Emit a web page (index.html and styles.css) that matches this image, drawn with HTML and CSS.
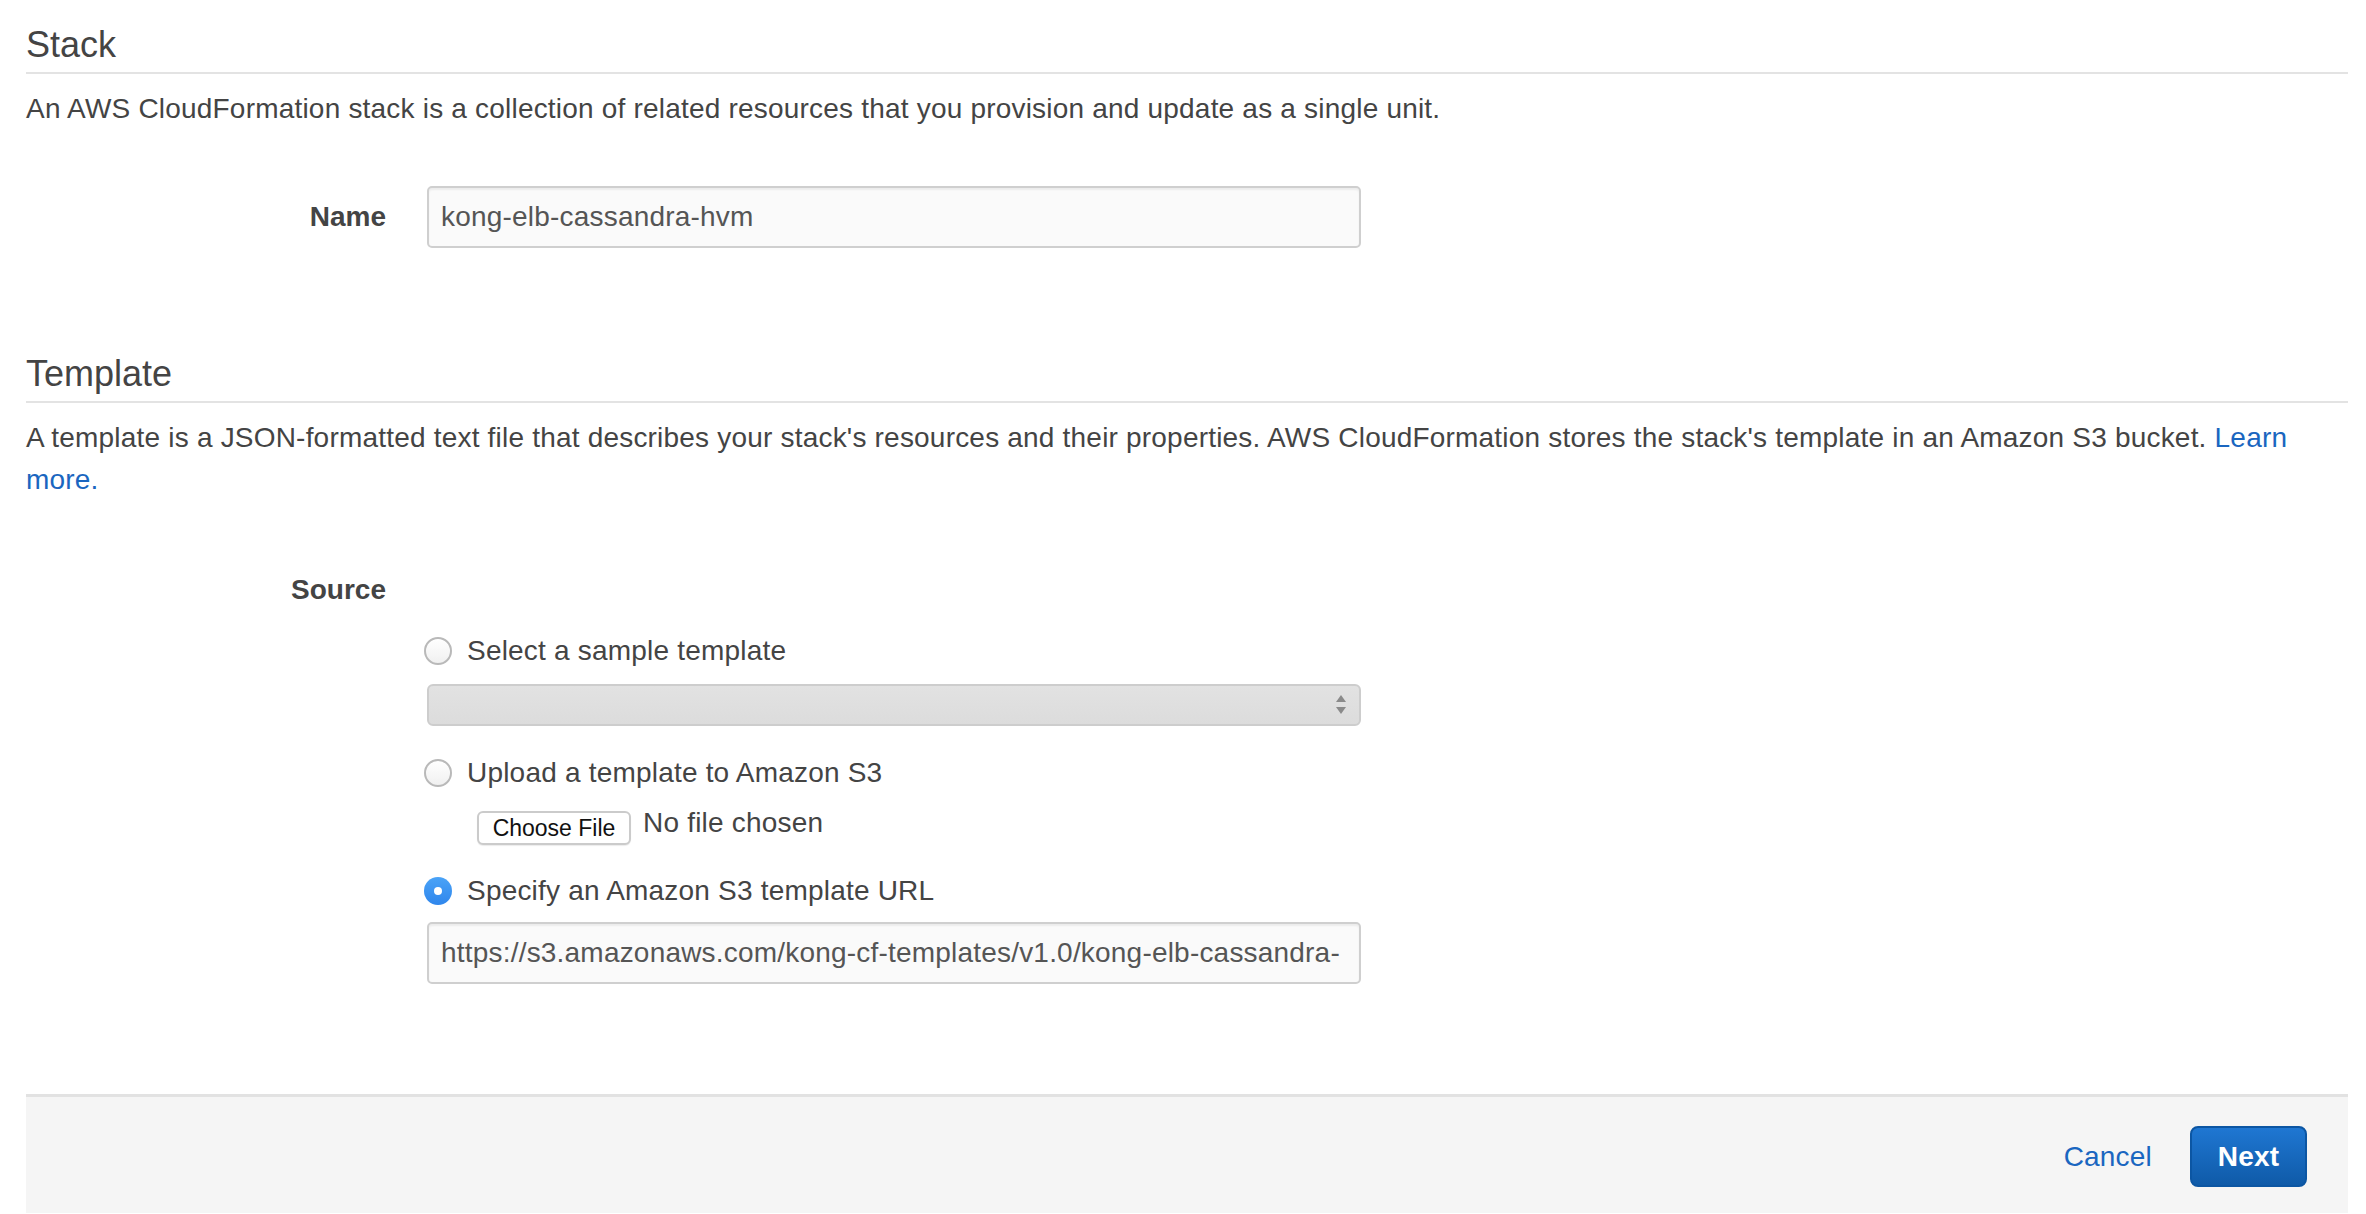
FILE: index.html
```html
<!DOCTYPE html>
<html>
<head>
<meta charset="utf-8">
<link rel="stylesheet" href="styles.css">
</head>
<body>
<div class="page">
  <section class="section stack">
    <h2 class="section-title">Stack</h2>
    <p class="section-desc">An AWS CloudFormation stack is a collection of related resources that you provision and update as a single unit.</p>
    <div class="form-row name-row">
      <div class="form-label">Name</div>
      <div class="text-field">kong-elb-cassandra-hvm</div>
    </div>
  </section>

  <section class="section template">
    <h2 class="section-title">Template</h2>
    <p class="section-desc">A template is a JSON-formatted text file that describes your stack's resources and their properties. AWS CloudFormation stores the stack's template in an Amazon S3 bucket. <a class="link" href="#">Learn more.</a></p>
    <div class="form-row source-row">
      <div class="form-label">Source</div>
      <div></div>
    </div>
    <div class="form-row">
      <div></div>
      <div class="options">
        <div class="radio-row">
          <span class="radio"></span>
          <span class="radio-label">Select a sample template</span>
        </div>
        <div class="select-field">
          <span class="select-arrows">
            <svg width="12" height="22" viewBox="0 0 12 22"><path d="M6 1 L11 8 L1 8 Z" fill="#8a8a8a"/><path d="M1 13 L11 13 L6 20 Z" fill="#8a8a8a"/></svg>
          </span>
        </div>
        <div class="radio-row gap-top">
          <span class="radio"></span>
          <span class="radio-label">Upload a template to Amazon S3</span>
        </div>
        <div class="file-row">
          <span class="file-btn">Choose File</span>
          <span class="file-text">No file chosen</span>
        </div>
        <div class="radio-row gap-top2">
          <span class="radio checked"></span>
          <span class="radio-label">Specify an Amazon S3 template URL</span>
        </div>
        <div class="text-field url-field">https://s3.amazonaws.com/kong-cf-templates/v1.0/kong-elb-cassandra-</div>
      </div>
    </div>
  </section>

  <footer class="footer">
    <a class="cancel" href="#">Cancel</a>
    <span class="btn-primary">Next</span>
  </footer>
</div>
</body>
</html>
```
FILE: styles.css
```css
html, body {
  margin: 0;
  padding: 0;
  background: #fff;
}
body {
  font-family: "Liberation Sans", Arial, Helvetica, sans-serif;
  font-size: 28px;
  line-height: 42px;
  letter-spacing: 0.2px;
  color: #444;
  overflow: hidden;
  height: 1214px;
}
.page {
  padding: 0 18px 0 26px;
}
.section-title {
  margin: 0;
  font-size: 36px;
  font-weight: normal;
  line-height: 44px;
  letter-spacing: 0;
  color: #444;
  padding-bottom: 5px;
  border-bottom: 2px solid #e3e3e3;
}
.stack .section-title {
  padding-top: 23px;
}
.template .section-title {
  margin-top: 104px;
}
.section-desc {
  margin: 14px 0 0;
  max-width: 2290px;
}
.link {
  color: #1a66c0;
  text-decoration: none;
}
.form-row {
  display: grid;
  grid-template-columns: 360px 934px;
  column-gap: 41px;
  align-items: center;
}
.name-row {
  margin-top: 56px;
}
.form-label {
  font-weight: bold;
  text-align: right;
  color: #444;
  letter-spacing: 0;
}
.text-field {
  box-sizing: border-box;
  height: 62px;
  border: 2px solid #cfcfcf;
  border-radius: 5px;
  background: #fafafa;
  box-shadow: inset 0 2px 2px rgba(0,0,0,0.06);
  padding: 0 12px;
  line-height: 58px;
  color: #555;
  white-space: nowrap;
  overflow: hidden;
}
.source-row {
  margin-top: 68px;
}
.options {
  display: flex;
  flex-direction: column;
  padding-top: 19px;
}
.radio-row {
  display: flex;
  align-items: center;
  gap: 15px;
  height: 42px;
}
.gap-top { margin-top: 26px; }
.gap-top2 { margin-top: 26px; }
.radio {
  box-sizing: border-box;
  width: 28px;
  height: 28px;
  border-radius: 50%;
  border: 2px solid #b9b9b9;
  background: linear-gradient(#ffffff, #f0f0f0);
  margin-left: -3px;
  flex: none;
  position: relative;
}
.radio.checked {
  border: none;
  background: linear-gradient(#4aa3f7, #2f86ec);
}
.radio.checked::after {
  content: "";
  position: absolute;
  left: 10px;
  top: 10px;
  width: 8px;
  height: 8px;
  border-radius: 50%;
  background: #fff;
}
.radio-label {
  color: #444;
}
.select-field {
  box-sizing: border-box;
  margin-top: 12px;
  height: 42px;
  border: 2px solid #cdcdcd;
  border-radius: 6px;
  background: linear-gradient(#e2e2e2, #dcdcdc);
  display: flex;
  align-items: center;
  justify-content: flex-end;
  padding-right: 12px;
}
.select-arrows {
  display: flex;
}
.file-row {
  display: flex;
  align-items: center;
  gap: 12px;
  margin-top: 8px;
  padding-left: 50px;
  height: 42px;
}
.file-btn {
  box-sizing: border-box;
  height: 34px;
  width: 154px;
  margin-top: 10px;
  border: 2px solid #cbcbcb;
  border-radius: 6px;
  background: #fff;
  box-shadow: 0 1px 1px rgba(0,0,0,0.08);
  font-size: 23px;
  line-height: 30px;
  letter-spacing: 0;
  color: #111;
  text-align: center;
}
.url-field {
  margin-top: 10px;
}
.footer {
  box-sizing: border-box;
  margin-top: 110px;
  height: 119px;
  background: #f5f5f5;
  border-top: 3px solid #e2e2e2;
  display: flex;
  justify-content: flex-end;
  align-items: flex-start;
  padding: 29px 41px 0 0;
  gap: 38px;
}
.cancel {
  color: #1a66c0;
  text-decoration: none;
  margin-top: 14px;
  line-height: 34px;
}
.btn-primary {
  box-sizing: border-box;
  width: 117px;
  height: 61px;
  border: 2px solid #0c56a3;
  border-radius: 8px;
  background: linear-gradient(#1f77d2, #0f5aa8);
  color: #fff;
  font-weight: bold;
  text-align: center;
  line-height: 57px;
}
```
